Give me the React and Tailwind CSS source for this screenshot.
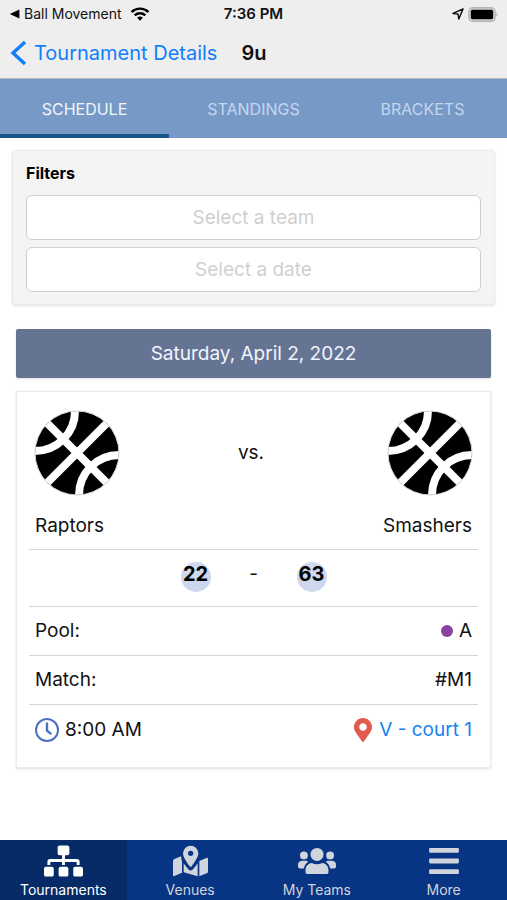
import { useState } from 'react';
import { FaSitemap, FaBars, FaMapMarkerAlt } from 'react-icons/fa';

const tabs = ['Schedule', 'Standings', 'Brackets'];

const navItems = [
  { label: 'Tournaments', icon: <FaSitemap className="w-[39px] h-[34px]" /> },
  { label: 'Venues', icon: <MapIcon /> },
  { label: 'My Teams', icon: <TeamIcon /> },
  { label: 'More', icon: <FaBars className="w-8 h-[34px]" /> },
];

const match = {
  home: { name: 'Raptors', score: 22 },
  away: { name: 'Smashers', score: 63 },
  pool: 'A',
  number: '#M1',
  time: '8:00 AM',
  venue: 'V - court 1',
};

function MapIcon() {
  return (
    <svg viewBox="0 0 105 92" className="w-[35px] h-[34px]" fill="currentColor">
      <path d="M0 47 Q0 42 4 40 L24 32 Q25 42 27 47 V81 L4 91 Q0 93 0 88 Z" />
      <path d="M32 53 Q38 62 46 71 Q53 78 60 71 Q68 62 74 53 V92 L32 80 Z" />
      <path d="M79 46 L100 37 Q105 35 105 40 V78 Q105 81 101 83 L79 92 Z" />
      <path
        fillRule="evenodd"
        d="M53 0 A23 23 0 0 1 76 23 C76 36 62 54 56 62 Q53 65 50 62 C44 54 30 36 30 23 A23 23 0 0 1 53 0 Z M53 15 A8 8 0 0 0 53 31 A8 8 0 0 0 53 15 Z"
      />
    </svg>
  );
}

function TeamIcon() {
  return (
    <svg viewBox="0 0 116 82" className="w-[38px] h-[34px]" fill="currentColor">
      <circle cx="58" cy="21" r="20" />
      <circle cx="18" cy="24" r="12" />
      <circle cx="98" cy="24" r="12" />
      <path d="M23 75 V69 C23 57 31 48 42 47 C52 52 64 52 74 47 C85 48 93 57 93 69 V75 Q93 81 87 81 H29 Q23 81 23 75 Z" />
      <path d="M0 58 V53 Q0 41 12 40 H24 Q28 40 31 43 Q20 51 18 64 H6 Q0 64 0 58 Z" />
      <path d="M116 58 V53 Q116 41 104 40 H92 Q88 40 85 43 Q96 51 98 64 H110 Q116 64 116 58 Z" />
    </svg>
  );
}

function StatusBar() {
  return (
    <div className="grid grid-cols-3 items-center h-7 px-2 text-sm">
      <div className="flex items-center gap-1 whitespace-nowrap">
        <svg viewBox="0 0 10 10" className="w-3 h-3">
          <path d="M1.5 5 L9.5 1.2 V8.8 Z" fill="#000" />
        </svg>
        <span>Ball Movement</span>
        <svg viewBox="0 0 18 14" className="w-5 h-4 ml-1 shrink-0" fill="none" stroke="#000" strokeWidth="2.2">
          <path d="M1.4 5.2 A11 11 0 0 1 16.6 5.2" />
          <path d="M4.2 8.2 A7 7 0 0 1 13.8 8.2" />
          <path d="M9 13 L6.4 10.4 A3.8 3.8 0 0 1 11.6 10.4 Z" fill="#000" stroke="none" />
        </svg>
      </div>
      <div className="text-center text-[15px] font-semibold">7:36 PM</div>
      <div className="flex items-center justify-end gap-1">
        <svg viewBox="0 0 12 12" className="w-3 h-3" fill="none" stroke="#111" strokeWidth="1.5" strokeLinejoin="round">
          <path d="M11 1 L1 5.4 L6 6 L6.8 11 Z" />
        </svg>
        <svg viewBox="0 0 31 15" className="w-[31px] h-[15px]">
          <rect x="0.8" y="0.8" width="26.4" height="13.4" rx="4" fill="#d6d6d6" stroke="#b4b4b4" strokeWidth="1.4" />
          <rect x="2.8" y="2.8" width="22.4" height="9.4" rx="1.6" fill="#000" />
          <path d="M28.6 5 Q30.6 7.5 28.6 10 Z" fill="#a9a9a9" />
        </svg>
      </div>
    </div>
  );
}

function Ball() {
  return (
    <svg viewBox="0 0 86 86" className="w-[86px] h-[86px]">
      <defs>
        <clipPath id="ball">
          <circle cx="43" cy="43" r="42" />
        </clipPath>
      </defs>
      <circle cx="43" cy="43" r="42" fill="#000" />
      <g clipPath="url(#ball)" fill="none" stroke="#fff" strokeWidth="8">
        <path d="M9 9 L77 77" />
        <path d="M77 9 L9 77" />
        <circle cx="1" cy="1" r="40" />
        <circle cx="85" cy="85" r="40" />
      </g>
      <circle cx="43" cy="43" r="42" fill="none" stroke="#d4d4d4" strokeWidth="1" />
    </svg>
  );
}

function Score({ value }) {
  return (
    <span className="w-[30px] h-[30px] rounded-full bg-[#cdd7ee] text-center text-xl leading-6 font-bold text-black">
      {value}
    </span>
  );
}

function Filter({ id, placeholder }) {
  return (
    <select
      id={id}
      aria-label={placeholder}
      className="block w-full h-[45px] pt-px appearance-none rounded-md border border-[#cfcfcf] bg-white text-[19px] text-[#cfcfcf] text-center [text-align-last:center]"
    >
      <option value="">{placeholder}</option>
    </select>
  );
}

export default function App() {
  const [tab, setTab] = useState('Schedule');
  const [page, setPage] = useState('Tournaments');

  return (
    <div className="min-h-screen flex flex-col bg-white text-[#111] font-['Inter',sans-serif]">
      <header className="bg-[#eeeeee] border-b border-[#b5bac2]">
        <StatusBar />
        <div className="flex items-center gap-6 h-[50px] px-2">
          <a href="#details" className="flex items-center gap-[6px] text-xl text-[#0f7ffa]">
            <svg viewBox="0 0 20 28" className="w-5 h-7" fill="none" stroke="currentColor" strokeWidth="3.4">
              <path d="M17 3 L5 14 L17 25" />
            </svg>
            Tournament Details
          </a>
          <h1 className="text-xl font-semibold">9u</h1>
        </div>
      </header>

      <div className="grid grid-cols-3 h-[59px] bg-[#7699c6]">
        {tabs.map(t => (
          <button
            key={t}
            onClick={() => setTab(t)}
            className={`pt-1 uppercase text-base border-b-4 ${
              tab === t ? 'text-[#f1f6fc] border-[#1b568b]' : 'text-[#c3d7ee] border-transparent'
            }`}
          >
            {t}
          </button>
        ))}
      </div>

      <main className="flex-1 px-3 pt-3">
        {/* Filters */}
        <section className="rounded-sm border border-[#ebebeb] bg-[#f4f4f4] px-[13px] pt-2 pb-3 shadow">
          <h2 className="mb-2 text-base leading-7 font-bold text-black">Filters</h2>
          <div className="space-y-[7px]">
            <Filter id="team" placeholder="Select a team" />
            <Filter id="date" placeholder="Select a date" />
          </div>
        </section>

        {/* Schedule */}
        <section className="mx-1 mt-6">
          <h2 className="rounded-xs bg-[#667493] text-center text-[19px] leading-[49px] text-[#f0f5ff] shadow">
            Saturday, April 2, 2022
          </h2>

          <article className="mt-[13px] border border-[#ebebeb] px-3 pb-3 text-[19px] shadow">
            <div className="flex justify-between px-[5px] pt-[18px] pb-[5px]">
              <div className="flex flex-col items-start gap-3">
                <Ball />
                <p className="px-px leading-9">{match.home.name}</p>
              </div>
              <p className="leading-[86px]">vs.</p>
              <div className="flex flex-col items-end gap-3">
                <Ball />
                <p className="px-px leading-9">{match.away.name}</p>
              </div>
            </div>
            <div className="flex justify-center h-[57px] pt-3 border-t border-[#d6d6d6]">
              <Score value={match.home.score} />
              <span className="w-[86px] text-center leading-6">-</span>
              <Score value={match.away.score} />
            </div>
            <div className="flex items-center justify-between h-[49px] px-[6px] border-t border-[#d6d6d6]">
              <span>Pool:</span>
              <span className="flex items-center gap-[6px]">
                <span className="w-3 h-3 rounded-full bg-[#8944a0]" />
                {match.pool}
              </span>
            </div>
            <div className="flex items-center justify-between h-[49px] px-[6px] border-t border-[#d6d6d6]">
              <span>Match:</span>
              <span>{match.number}</span>
            </div>
            <div className="flex items-center justify-between h-[51px] px-[6px] border-t border-[#d6d6d6]">
              <span className="flex items-center gap-[6px]">
                <svg viewBox="0 0 24 24" className="w-6 h-6" fill="none" stroke="#4d6fc4" strokeWidth="2">
                  <circle cx="12" cy="12" r="11" />
                  <path d="M12 5.5 V12.6 L15.6 15.6" strokeLinecap="round" strokeWidth="2.4" />
                </svg>
                {match.time}
              </span>
              <a href="#venue" className="flex items-center gap-[6px] text-[#1583f0]">
                <FaMapMarkerAlt className="w-5 h-6 text-[#e05a4e]" />
                {match.venue}
              </a>
            </div>
          </article>
        </section>
      </main>

      <nav className="sticky bottom-0 grid grid-cols-4 h-[60px] bg-[#083583]">
        {navItems.map(item => (
          <button
            key={item.label}
            onClick={() => setPage(item.label)}
            className={`flex flex-col items-center pt-1 text-sm ${
              page === item.label ? 'bg-[#062b66] text-white' : 'text-[#d0d4dc]'
            }`}
          >
            {item.icon}
            <span className="mt-[2px]">{item.label}</span>
          </button>
        ))}
      </nav>
    </div>
  );
}
